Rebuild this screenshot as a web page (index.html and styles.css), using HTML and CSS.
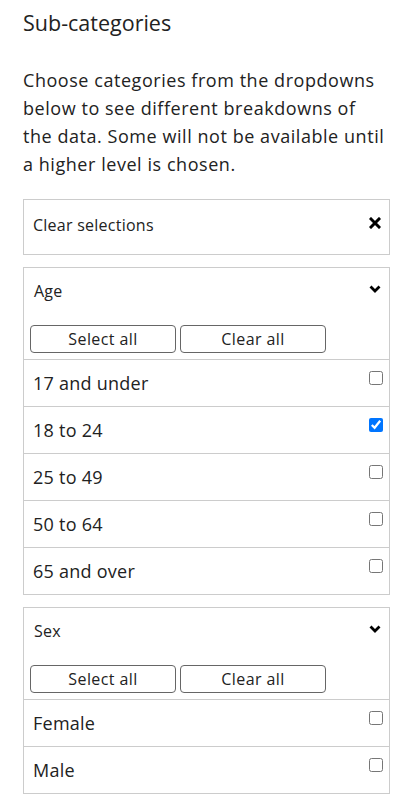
FILE: index.html
```html
<!DOCTYPE html>
<html lang="en">
<head>
  <meta charset="UTF-8">
  <title>Sub-categories</title>
  <link rel="stylesheet" href="styles.css">
</head>
<body>
  <div class="sidebar">
    <h2>Sub-categories</h2>
    <p class="intro">Choose categories from the dropdowns below to see different breakdowns of the data. Some will not be available until a higher level is chosen.</p>

    <div class="panel clear-panel">
      <span class="panel-title">Clear selections</span>
      <svg class="icon icon-x" viewBox="0 0 12 12" width="12" height="12">
        <path d="M2 2 L10 10 M10 2 L2 10" stroke="#000" stroke-width="3" stroke-linecap="square"/>
      </svg>
    </div>

    <div class="panel">
      <div class="panel-head">
        <span class="panel-title">Age</span>
        <svg class="icon icon-chevron" viewBox="0 0 12 8" width="12" height="8">
          <path d="M1.5 1.5 L6 6 L10.5 1.5" fill="none" stroke="#000" stroke-width="2.8"/>
        </svg>
      </div>
      <div class="panel-buttons">
        <button>Select all</button>
        <button>Clear all</button>
      </div>
      <label class="option"><span>17 and under</span><input type="checkbox"></label>
      <label class="option"><span>18 to 24</span><input type="checkbox" checked></label>
      <label class="option"><span>25 to 49</span><input type="checkbox"></label>
      <label class="option"><span>50 to 64</span><input type="checkbox"></label>
      <label class="option"><span>65 and over</span><input type="checkbox"></label>
    </div>

    <div class="panel">
      <div class="panel-head">
        <span class="panel-title">Sex</span>
        <svg class="icon icon-chevron" viewBox="0 0 12 8" width="12" height="8">
          <path d="M1.5 1.5 L6 6 L10.5 1.5" fill="none" stroke="#000" stroke-width="2.8"/>
        </svg>
      </div>
      <div class="panel-buttons">
        <button>Select all</button>
        <button>Clear all</button>
      </div>
      <label class="option"><span>Female</span><input type="checkbox"></label>
      <label class="option"><span>Male</span><input type="checkbox"></label>
    </div>
  </div>
</body>
</html>
```

FILE: styles.css
```css
body {
  margin: 0;
  font-family: "Open Sans", sans-serif;
  color: #222;
  background: #fff;
}

.sidebar {
  padding: 0 21px 0 23px;
}

.sidebar h2 {
  font-size: 21.5px;
  font-weight: normal;
  line-height: 30px;
  margin: 8px 0 0 0;
}

.intro {
  font-size: 18px;
  line-height: 28px;
  letter-spacing: 0.55px;
  margin: 28px 5px 21px 0;
}

.panel {
  border: 1px solid #ccc;
  margin-bottom: 12px;
}

.clear-panel {
  display: flex;
  justify-content: space-between;
  align-items: flex-start;
  padding: 14px 8px 18px 9px;
  font-size: 16px;
  line-height: 22px;
  letter-spacing: 0.25px;
}

.icon-x {
  margin-top: 3px;
}

.panel-head {
  display: flex;
  justify-content: space-between;
  align-items: flex-start;
  padding: 12px 8px 0 10px;
  font-size: 16px;
  line-height: 22px;
  letter-spacing: 0.25px;
}

.icon-chevron {
  margin-top: 5px;
}

.panel-buttons {
  display: flex;
  gap: 4px;
  padding: 23px 6px 6px 6px;
  border-bottom: 1px solid #ccc;
}

.panel-buttons button {
  width: 146px;
  height: 28px;
  background: #fff;
  border: 1px solid #666;
  border-radius: 4px;
  font-family: inherit;
  font-size: 16px;
  letter-spacing: 0.4px;
  color: #222;
  padding: 0;
  cursor: pointer;
}

.option {
  display: flex;
  justify-content: space-between;
  align-items: flex-start;
  padding: 10px 0 9px 9px;
  font-size: 18px;
  line-height: 27px;
  letter-spacing: 0.25px;
  border-bottom: 1px solid #ccc;
}

.option:last-child {
  border-bottom: none;
}

.option input {
  width: 14px;
  height: 14px;
  margin: 1px 6px 0 0;
}
```
